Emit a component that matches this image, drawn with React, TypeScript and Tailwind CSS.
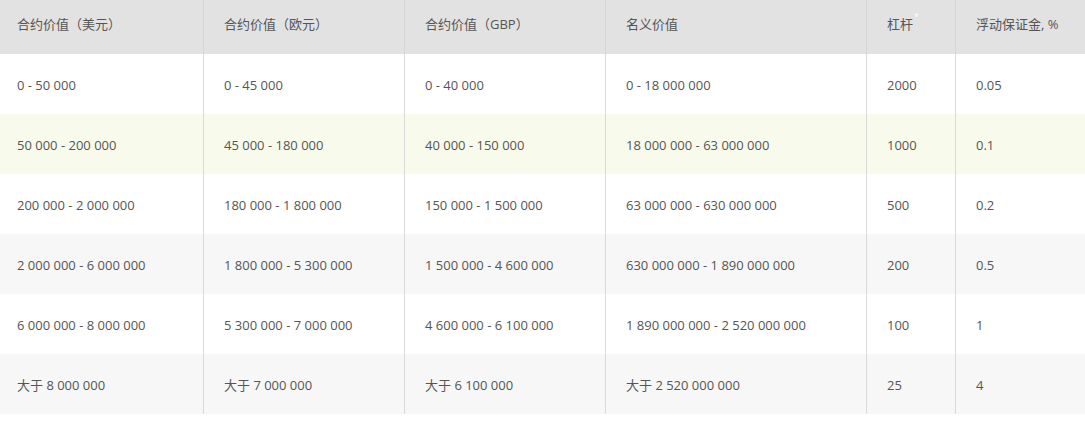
import React from 'react';

const headers = ['合约价值（美元）', '合约价值（欧元）', '合约价值（GBP）', '名义价值', '杠杆', '浮动保证金, %'];

const widths = ['w-[204px]', 'w-[201px]', 'w-[201px]', 'w-[261px]', 'w-[89px]', 'flex-1'];
const pads = ['pl-[17px]', 'pl-[20px]', 'pl-[20px]', 'pl-[20px]', 'pl-[20px]', 'pl-[20px]'];

const rows = [
  { bg: 'bg-white', cells: ['0 - 50 000', '0 - 45 000', '0 - 40 000', '0 - 18 000 000', '2000', '0.05'] },
  { bg: 'bg-[#f8fbeb]', cells: ['50 000 - 200 000', '45 000 - 180 000', '40 000 - 150 000', '18 000 000 - 63 000 000', '1000', '0.1'] },
  { bg: 'bg-white', cells: ['200 000 - 2 000 000', '180 000 - 1 800 000', '150 000 - 1 500 000', '63 000 000 - 630 000 000', '500', '0.2'] },
  { bg: 'bg-[#f7f7f7]', cells: ['2 000 000 - 6 000 000', '1 800 000 - 5 300 000', '1 500 000 - 4 600 000', '630 000 000 - 1 890 000 000', '200', '0.5'] },
  { bg: 'bg-white', cells: ['6 000 000 - 8 000 000', '5 300 000 - 7 000 000', '4 600 000 - 6 100 000', '1 890 000 000 - 2 520 000 000', '100', '1'] },
  { bg: 'bg-[#f7f7f7]', cells: ['大于 8 000 000', '大于 7 000 000', '大于 6 100 000', '大于 2 520 000 000', '25', '4'] },
];

const App: React.FC = () => {
  return (
    <div
      className="w-[1085px] h-[422px] bg-white text-[13px] text-[#555]"
      style={{ fontFamily: '"Open Sans", "Noto Sans CJK SC", sans-serif' }}
    >
      {/* Header */}
      <div className="flex h-[54px] bg-[#e2e2e2]">
        {headers.map((h, i) => (
          <div
            key={h}
            className={`${widths[i]} ${pads[i]} shrink-0 flex items-center pb-[5px] ${i < 5 ? 'border-r border-[#d6d6d6]' : ''}`}
          >
            <span className="relative">
              {h}
              {i === 4 && <span className="absolute -right-[6px] -top-[5px] text-[9px] text-white">*</span>}
            </span>
          </div>
        ))}
      </div>

      {/* Rows */}
      {rows.map((row, r) => (
        <div key={r} className={`flex h-[60px] ${row.bg}`}>
          {row.cells.map((c, i) => (
            <div
              key={i}
              className={`${widths[i]} ${pads[i]} shrink-0 flex items-center pt-[3px] ${i < 5 ? 'border-r border-[#d9d9d9]' : ''}`}
            >
              {c}
            </div>
          ))}
        </div>
      ))}
    </div>
  );
};

export default App;
